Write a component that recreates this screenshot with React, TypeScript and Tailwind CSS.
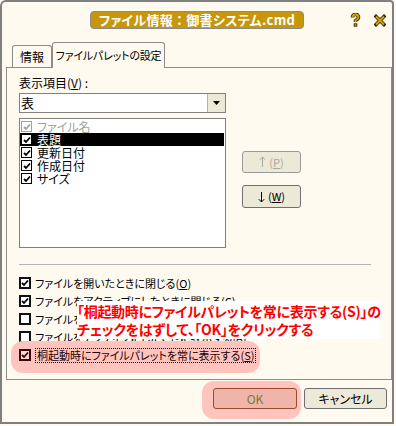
import React from "react";

const ui = "font-['Noto_Sans_CJK_JP','Noto_Sans',sans-serif] [font-feature-settings:'palt']";

const Check = ({ color = "#000" }: { color?: string }) => (
  <svg width="8" height="8" viewBox="0 0 8 8">
    <polyline points="1,4 3,6 7,1.5" fill="none" stroke={color} strokeWidth="1.8" />
  </svg>
);

const Arrow = ({ up, color }: { up?: boolean; color: string }) => (
  <svg width="7" height="12" viewBox="0 0 7 12" className={up ? "" : "rotate-180"}>
    <path d="M3.5 1 L3.5 11 M0.8 3.8 L3.5 1 L6.2 3.8" fill="none" stroke={color} strokeWidth="1" />
  </svg>
);

const ListItem = ({
  label,
  selected,
  disabled,
}: {
  label: string;
  selected?: boolean;
  disabled?: boolean;
}) => (
  <div
    className={`flex items-center h-[13px] pl-[1px] gap-[5px] text-[12px] leading-[13px] ${
      selected ? "bg-black text-white" : disabled ? "text-[#a0a0a0]" : "text-black"
    }`}
  >
    <span
      className={`flex items-center justify-center w-[11px] h-[11px] border bg-white ${
        disabled ? "border-[#a0a0a0]" : "border-black"
      }`}
    >
      <Check color={disabled ? "#a0a0a0" : "#000"} />
    </span>
    <span>{label}</span>
  </div>
);

const Mn = ({ c }: { c: string }) => (
  <>
    (<span className="underline underline-offset-1">{c}</span>)
  </>
);

const Box = ({ checked, tint }: { checked?: boolean; tint?: boolean }) => (
  <span
    className={`flex items-center justify-center w-[12px] h-[12px] border-2 shrink-0 ${
      tint ? "border-[#3a0606] bg-[#ffd6d0]" : "border-[#111] bg-white"
    }`}
  >
    {checked && <Check color={tint ? "#3a0606" : "#000"} />}
  </span>
);

const Row = ({ checked, children }: { checked?: boolean; children: React.ReactNode }) => (
  <div className="flex items-center h-[18px] gap-[4px] text-[11px] text-black whitespace-nowrap">
    <Box checked={checked} />
    <span className="leading-[13px]">{children}</span>
  </div>
);

export default function App() {
  return (
    <div className={`w-[396px] h-[426px] bg-[#fffaf0] ${ui}`}>
      <div className="relative w-[394px] h-[424px] border-2 border-[#808080] rounded-tl-[6px] rounded-tr-[4px] flex flex-col">
        {/* header */}
        <div className="grid grid-cols-[1fr_auto_1fr] items-center mt-[8px] h-[20px]">
          <div />
          <div className="h-[18px] px-[8px] flex items-center rounded-[4px] border border-[#8a8a8a] bg-[#c8960a] text-white font-bold text-[13px] leading-[16px] tracking-[0.3px] whitespace-nowrap">
            ファイル情報 ： 御書システム.cmd
          </div>
          <div className="flex justify-end items-center gap-[13px] pr-[6px]">
            <svg width="11" height="14" viewBox="0 0 11 14">
              <path d="M2.5 4.5 Q2.5 1.5 5.5 1.5 Q8.5 1.5 8.5 4.3 Q8.5 6 5.5 7.5 L5.5 9" fill="none" stroke="#3b2a00" strokeWidth="3.6" strokeLinejoin="round" />
              <path d="M2.5 4.5 Q2.5 1.5 5.5 1.5 Q8.5 1.5 8.5 4.3 Q8.5 6 5.5 7.5 L5.5 9" fill="none" stroke="#d9a20f" strokeWidth="1.8" />
              <rect x="3.7" y="10.3" width="3.6" height="3.4" fill="#3b2a00" />
              <rect x="4.6" y="11.2" width="1.8" height="1.6" fill="#d9a20f" />
            </svg>
            <svg width="12" height="13" viewBox="0 0 12 13">
              <path d="M2 2.5 L10 10.5 M10 2.5 L2 10.5" fill="none" stroke="#3b2a00" strokeWidth="3.6" strokeLinecap="square" />
              <path d="M2 2.5 L10 10.5 M10 2.5 L2 10.5" fill="none" stroke="#d9a20f" strokeWidth="1.8" />
            </svg>
          </div>
        </div>

        {/* tabs */}
        <div className="flex items-end ml-[10px] mt-[12px] relative z-10">
          <div className="w-[40px] h-[22px] border border-b-0 border-[#8c8c8c] rounded-t-[3px] flex items-center justify-center text-[12px] text-black">
            情報
          </div>
          <div className="w-[113px] h-[26px] -mb-[1px] border border-b-0 border-[#8c8c8c] rounded-t-[3px] bg-[#fffaf0] flex items-center justify-center text-[11px] text-black whitespace-nowrap tracking-[-0.2px]">
            ファイルパレットの設定
          </div>
        </div>

        {/* panel */}
        <div className="ml-[4px] w-[386px] h-[313px] border border-[#8c8c8c] pl-[12px] pt-[8px]">
          <div className="text-[12px] leading-[14px] text-black">
            表示項目<Mn c="V" /> :
          </div>
          <div className="flex mt-[3px]">
            <div className="flex flex-col">
              <div className="w-[207px] h-[20px] border border-[#808080] bg-white flex">
                <div className="flex-1 flex items-center pl-[1px] text-[13px] text-black">表</div>
                <div className="w-[18px] border-l border-[#b0b0b0] bg-[#ece9d8] flex items-center justify-center">
                  <svg width="7" height="4" viewBox="0 0 7 4">
                    <polygon points="0,0 7,0 3.5,4" fill="#000" />
                  </svg>
                </div>
              </div>
              <div className="mt-[5px] w-[207px] h-[130px] border border-[#808080] bg-white pt-[1px] pr-[1px]">
                <ListItem label="ファイル名" disabled />
                <ListItem label="表題" selected />
                <ListItem label="更新日付" />
                <ListItem label="作成日付" />
                <ListItem label="サイズ" />
              </div>
            </div>
            <div className="flex flex-col gap-[12px] ml-[16px] pt-[58px]">
              <div className="w-[59px] h-[22px] rounded-[3px] border border-[#9a9a9a] bg-[#ece9d8] flex items-center justify-center gap-[3px] text-[11px] text-[#aca899]">
                <Arrow up color="#aca899" />
                <span><Mn c="P" /></span>
              </div>
              <div className="w-[59px] h-[23px] rounded-[3px] border border-[#6f6f6f] bg-[#ece9d8] flex items-center justify-center gap-[3px] text-[11px] text-black">
                <Arrow color="#000" />
                <span><Mn c="W" /></span>
              </div>
            </div>
          </div>

          <div className="mt-[16px] w-[352px] h-px bg-[#b4b4b4]" />

          <div className="mt-[9px] flex flex-col">
            <Row checked>
              ファイルを開いたときに閉じる<Mn c="O" />
            </Row>
            <Row checked>
              ファイルをアクティブにしたときに閉じる<Mn c="C" />
            </Row>
            <Row>
              ファイルを閉じたときに表示する<Mn c="D" />
            </Row>
            <Row>
              ファイルをアクティブにしたときに表示する<Mn c="A" />
            </Row>
            <div className="-ml-[8px] -mt-[5px] pt-[5px] pb-[9px] pl-[8px] pr-[4px] w-fit rounded-[12px] bg-[#ffc4be]">
              <div className="flex items-center h-[18px] gap-[4px] text-[11px] text-[#1a0000] whitespace-nowrap">
                <Box checked tint />
                <span className="leading-[13px] border border-dotted border-[#1a0000] px-[1px]">
                  桐起動時にファイルパレットを常に表示する<Mn c="S" />
                </span>
              </div>
            </div>
          </div>
        </div>

        {/* buttons */}
        <div className="flex justify-end items-start mt-[1px] pr-[5px]">
          <div className="pl-[11px] pr-[4px] pt-[7px] pb-[10px] rounded-[12px] bg-[#ffc4be]">
            <div className="w-[84px] h-[21px] rounded-[3px] border border-[#9a4a30] bg-[#f0b4aa] flex items-center justify-center text-[12px] text-[#6e7d45]">
              OK
            </div>
          </div>
          <div className="ml-[3px] mt-[7px] w-[83px] h-[21px] rounded-[3px] border border-[#6f6f6f] bg-[#ece9d8] flex items-center justify-center text-[12px] text-black">
            キャンセル
          </div>
        </div>

        {/* annotation */}
        <div className="absolute left-[75px] top-[299px] w-[304px] h-[38px] bg-white text-[#ff0000] font-bold text-[14px] leading-[18px] tracking-[-0.3px] whitespace-nowrap pt-[1px]">
          <div>「桐起動時にファイルパレットを常に表示する(S)」の</div>
          <div>チェックをはずして、「OK」をクリックする</div>
        </div>
      </div>
    </div>
  );
}
